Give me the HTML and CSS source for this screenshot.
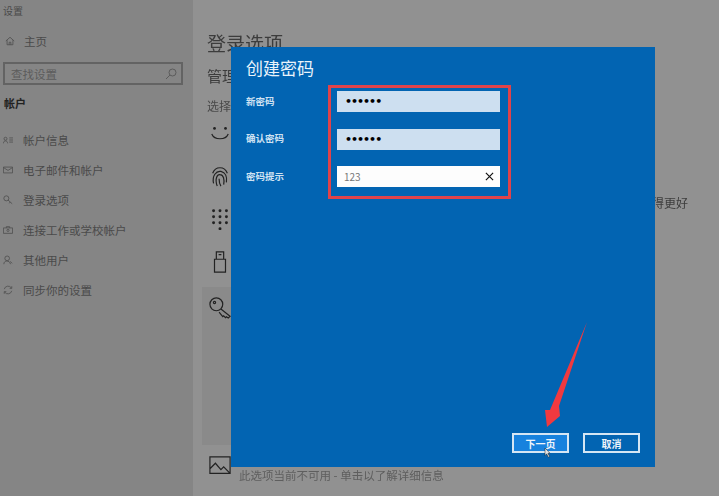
FILE: index.html
```html
<!DOCTYPE html>
<html>
<head>
    <link rel="stylesheet" href="styles.css">
</head>
<body>
    <div class="window">
        <div class="sidebar">
            <div class="app-title">设置</div>
            <div class="home">
                <svg class="nav-icon" viewBox="0 0 12 12"><path d="M1 6 6 1.500 11 6M2.500 5v5.500h7V5M5 10.500V7.500h2v3"/></svg>
                <span>主页</span>
            </div>
            <div class="search">
                <span>查找设置</span>
                <svg class="search-icon" viewBox="0 0 12 12"><circle cx="7.500" cy="4.500" r="3.500"/><path d="M5 7 1 11"/></svg>
            </div>
            <div class="section">帐户</div>
            <div class="nav">
                <div class="nav-item">
                    <svg class="nav-icon" viewBox="0 0 12 12"><circle cx="3" cy="4.500" r="1.800"/><path d="M.5 10c0-4 5-4 5 0M7.500 3.500H12M7.500 6H12M7.500 8.500H12"/></svg>
                    <span>帐户信息</span>
                </div>
                <div class="nav-item">
                    <svg class="nav-icon" viewBox="0 0 12 12"><path d="M.5 2.500h11v7H.5zM.5 3 6 6.500 11.500 3"/></svg>
                    <span>电子邮件和帐户</span>
                </div>
                <div class="nav-item">
                    <svg class="nav-icon" viewBox="0 0 12 12"><circle cx="4" cy="4" r="3"/><path d="M6 6l5 4.500M8.500 8.500 7.500 10"/></svg>
                    <span>登录选项</span>
                </div>
                <div class="nav-item">
                    <svg class="nav-icon" viewBox="0 0 12 12"><path d="M.5 3.500h11v6.500H.5zM4 3.500V2h4v1.500"/><circle cx="6" cy="6.500" r="1.300"/></svg>
                    <span>连接工作或学校帐户</span>
                </div>
                <div class="nav-item">
                    <svg class="nav-icon" viewBox="0 0 12 12"><circle cx="5" cy="4" r="2.800"/><path d="M1 11c0-5 7-5 8 0M8.500 7.500 11 10"/></svg>
                    <span>其他用户</span>
                </div>
                <div class="nav-item">
                    <svg class="nav-icon" viewBox="0 0 12 12"><path d="M1.500 5A4.700 4.700 0 0 1 10 3.500M10.500 7A4.700 4.700 0 0 1 2 8.500M10.500 1.500v2.500H8M1.500 10.500V8H4"/></svg>
                    <span>同步你的设置</span>
                </div>
            </div>
        </div>
        <div class="content">
            <div class="page-title">登录选项</div>
            <div class="page-sub">管理你登录设备的方式</div>
            <div class="page-hint">选择登录方式</div>
            <div class="options">
                <div class="option">
                    <svg viewBox="0 0 24 24"><circle cx="6" cy="7" r="1.500" class="dot"/><circle cx="18" cy="7" r="1.500" class="dot"/><path d="M3 13c3 7 15 7 18 0"/></svg>
                </div>
                <div class="option">
                    <svg viewBox="0 0 24 24"><path d="M4 9C7 1 17 1 20 9M5 20C3 12 8 6 13 7c5 1 7 6 6 12M9 23C6 15 9 10 12 10.500c4 .5 5 5 4 11M13 23c-2-3-2-5-2-8"/></svg>
                </div>
                <div class="option">
                    <svg viewBox="0 0 24 24"><g class="dot"><circle cx="5" cy="3" r="1.600"/><circle cx="12" cy="3" r="1.600"/><circle cx="19" cy="3" r="1.600"/><circle cx="5" cy="9.500" r="1.600"/><circle cx="12" cy="9.500" r="1.600"/><circle cx="19" cy="9.500" r="1.600"/><circle cx="5" cy="16" r="1.600"/><circle cx="12" cy="16" r="1.600"/><circle cx="19" cy="16" r="1.600"/><circle cx="12" cy="22.500" r="1.600"/></g></svg>
                </div>
                <div class="option">
                    <svg viewBox="0 0 24 24"><path d="M6 9h12v14H6zM8 9V1h8v8M10.500 4h3"/></svg>
                </div>
                <div class="option option-active">
                    <svg viewBox="0 0 24 24"><circle cx="8" cy="8" r="7"/><circle cx="6" cy="6" r="1.200"/><path d="M13 13l10 8-2 2-2-1.500-1 1-2-2-1 1-4-5"/></svg>
                </div>
                <div class="option option-picture">
                    <svg viewBox="0 0 24 24"><path d="M1 2h22v18H1zM1 15l6-6 6 7 3-3 7 7"/></svg>
                    <span>此选项当前不可用 - 单击以了解详细信息</span>
                </div>
            </div>
            <div class="cut-text">得更好</div>
        </div>
    </div>

    <div class="dialog">
        <div class="dialog-title">创建密码</div>
        <div class="fields">
            <div class="field">
                <label>新密码</label>
                <div class="input input-filled">••••••</div>
            </div>
            <div class="field">
                <label>确认密码</label>
                <div class="input input-filled">••••••</div>
            </div>
            <div class="field">
                <label>密码提示</label>
                <div class="input input-hint">
                    <span>123</span>
                    <svg class="clear" viewBox="0 0 10 10"><path d="M1 1l8 8M9 1 1 9"/></svg>
                </div>
            </div>
        </div>
        <div class="buttons">
            <div class="btn btn-hover">下一页</div>
            <div class="btn">取消</div>
        </div>
    </div>

    <svg class="arrow" viewBox="0 0 50 110"><path d="M47 2 19 86 20 96 7 107 5 90 10 90Z"/></svg>
    <svg class="cursor" viewBox="0 0 8 12"><path d="M1 0v9l2-2 2 4 1.500-.7-2-4H7Z"/></svg>
</body>
</html>
```

FILE: styles.css
```css
body {
    margin: 0;
    width: 719px;
    height: 496px;
    overflow: hidden;
    font-family: "Noto Sans CJK SC", "Noto Sans", sans-serif;
    background-color: #919191;
    position: relative;
    filter: blur(0.5px);
}
.window {
    display: flex;
    height: 496px;
}
.sidebar {
    width: 193px;
    flex-shrink: 0;
    background-color: #858585;
    color: #4a4a4a;
    font-size: 11.5px;
}
.app-title {
    font-size: 10px;
    padding: 3px 0 0 3px;
    line-height: 15px;
}
.home {
    display: flex;
    align-items: center;
    gap: 9px;
    padding: 14px 0 0 5px;
    height: 17px;
}
.nav-icon {
    width: 10px;
    height: 10px;
    flex-shrink: 0;
    fill: none;
    stroke: #4f4f4f;
    stroke-width: 1;
}
.search {
    display: flex;
    align-items: center;
    justify-content: space-between;
    box-sizing: border-box;
    width: 180px;
    height: 23px;
    margin: 13px 0 0 3px;
    padding: 0 4px 0 6px;
    border: 2px solid #636363;
    color: #5c5c5c;
}
.search-icon {
    width: 12px;
    height: 12px;
    fill: none;
    stroke: #5c5c5c;
    stroke-width: 1;
}
.section {
    font-size: 11px;
    font-weight: bold;
    color: #222;
    padding: 9px 0 0 4px;
    line-height: 18px;
}
.nav {
    padding-top: 13px;
}
.nav-item {
    display: flex;
    align-items: center;
    gap: 10px;
    height: 30px;
    padding-left: 3px;
}
.content {
    flex: 1;
    color: #3c3c3c;
    padding-left: 14px;
    position: relative;
}
.page-title {
    font-size: 19px;
    line-height: 26px;
    padding-top: 30px;
}
.page-sub {
    font-size: 15px;
    line-height: 20px;
    padding-top: 10px;
}
.page-hint {
    font-size: 12px;
    line-height: 16px;
    padding-top: 12px;
    color: #4a4a4a;
}
.options {
    margin-top: 8px;
}
.option {
    display: flex;
    align-items: flex-start;
    height: 43px;
}
.option svg {
    width: 22px;
    height: 22px;
    margin-left: 2px;
    flex-shrink: 0;
    fill: none;
    stroke: #222;
    stroke-width: 1.3;
}
.option .dot {
    fill: #222;
    stroke: none;
}
.option-active {
    height: 158px;
    width: 40px;
    margin: -7px 0 0 -5px;
    padding: 10px 0 0 5px;
    box-sizing: border-box;
    background-color: #8a8a8a;
}
.option-picture {
    gap: 8px;
    padding-top: 10px;
}
.option-picture span {
    font-size: 11.5px;
    color: #5e5e5e;
    line-height: 16px;
    padding-top: 12px;
    white-space: nowrap;
}
.cut-text {
    position: absolute;
    left: 459px;
    top: 194px;
    font-size: 12px;
    line-height: 18px;
}
.dialog {
    position: absolute;
    left: 231px;
    top: 47px;
    width: 424px;
    height: 420px;
    box-sizing: border-box;
    background-color: #0264b2;
    color: #fff;
    padding-left: 15px;
    display: flex;
    flex-direction: column;
}
.dialog-title {
    font-size: 17px;
    line-height: 24px;
    padding-top: 9px;
    color: #eaf3fa;
}
.fields {
    box-sizing: border-box;
    width: 265px;
    height: 114px;
    margin-top: 5px;
    display: flex;
    flex-direction: column;
    justify-content: space-between;
    padding: 6px 11px 12px 0;
}
.field {
    display: flex;
    align-items: center;
    height: 21px;
}
.field label {
    width: 91px;
    padding-bottom: 2px;
    font-size: 9.5px;
    font-weight: bold;
    color: #cfe2f2;
}
.input {
    box-sizing: border-box;
    width: 163px;
    height: 21px;
    display: flex;
    align-items: center;
    padding-left: 7px;
    color: #111;
}
.input-filled {
    background-color: #cddff0;
    font-family: "DejaVu Sans", sans-serif;
    font-size: 11px;
    font-weight: bold;
    letter-spacing: -1px;
    padding-left: 8px;
    color: #000;
}
.input-hint {
    background-color: #fdfdfd;
    justify-content: space-between;
    padding-right: 6px;
    font-size: 10px;
    color: #777;
}
.clear {
    width: 9px;
    height: 9px;
    fill: none;
    stroke: #111;
    stroke-width: 1.3;
}
.buttons {
    display: flex;
    gap: 14px;
    justify-content: flex-end;
    margin-top: auto;
    padding: 0 15px 14px 0;
}
.btn {
    box-sizing: border-box;
    width: 57px;
    height: 20px;
    display: flex;
    align-items: center;
    justify-content: center;
    border: 2px solid #d5e6f4;
    font-size: 10px;
    font-weight: bold;
    color: #eef5fb;
}
.btn-hover {
    background-color: #1782de;
}
.fields::after {
    content: "";
    position: absolute;
    left: 97px;
    top: 38px;
    width: 177px;
    height: 108px;
    border: 3px solid #e0434a;
    pointer-events: none;
}
.arrow {
    position: absolute;
    left: 540px;
    top: 320px;
    width: 50px;
    height: 110px;
    fill: #f1393f;
}
.cursor {
    position: absolute;
    left: 544px;
    top: 448px;
    width: 7px;
    height: 10px;
    fill: #e8e8e8;
    stroke: #222;
    stroke-width: .6;
}
```
